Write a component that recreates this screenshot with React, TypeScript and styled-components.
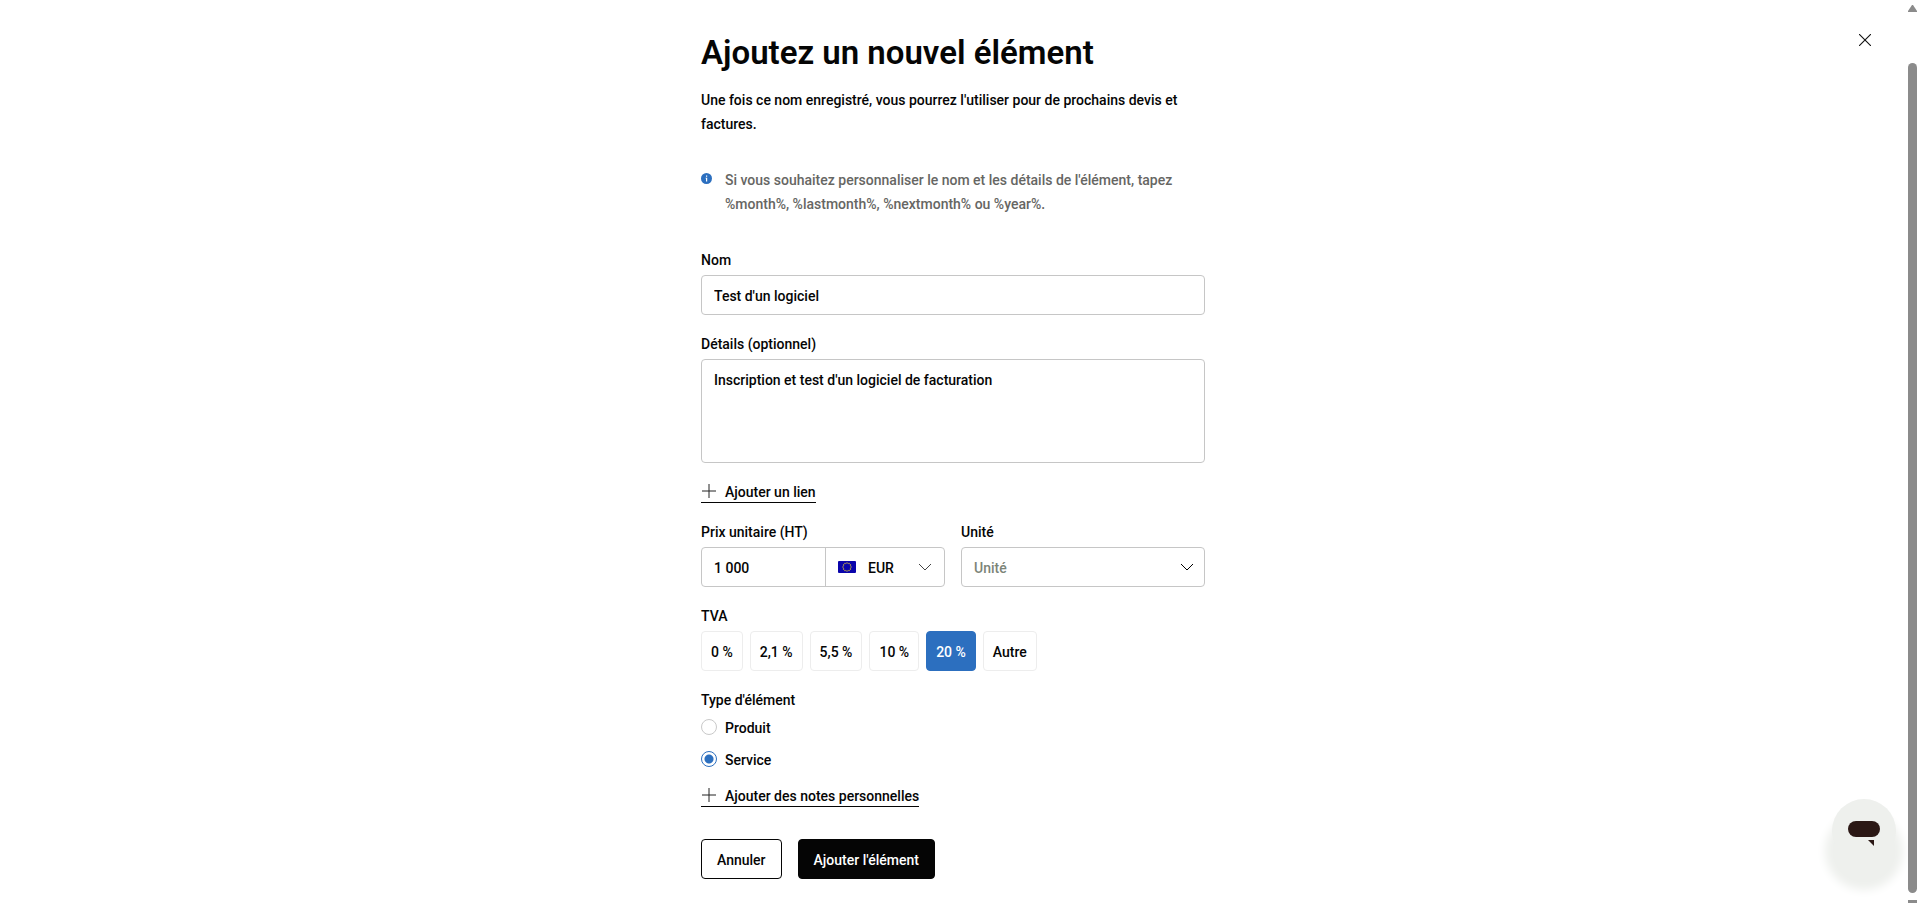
import React, { useState } from "react";
import styled, { createGlobalStyle, css } from "styled-components";

const INK = "#050505";
const BLUE = "#2c6fbf";
const LINE = "#c6c6c6";

const Global = createGlobalStyle`
  *, *::before, *::after { box-sizing: border-box; }
  html, body { margin: 0; background: #fff; }
  html { scrollbar-width: none; }
  body, button, input, textarea, select {
    font-family: Roboto, "Liberation Sans", sans-serif;
    font-size: 14px;
    font-weight: 500;
    line-height: 24px;
    color: ${INK};
  }
`;

const Page = styled.div`
  padding: 30px 14px 24px 0;
`;

const Form = styled.form`
  display: flex;
  flex-direction: column;
  gap: 17px;
  max-width: 504px;
  margin: 0 auto;
`;

const Header = styled.header`
  display: flex;
  flex-direction: column;
  gap: 12px;
`;

const Title = styled.h1`
  margin: 0;
  font-size: 33px;
  line-height: 46px;
  font-weight: 600;
`;

const Intro = styled.p`
  margin: 0;
`;

const Notice = styled.div`
  display: flex;
  gap: 13px;
  margin: 15px 0;
  color: #666663;

  p { margin: 0; }
  svg { flex: none; margin-top: 5px; }
`;

const Field = styled.div`
  display: flex;
  flex-direction: column;
  gap: 3px;
`;

const Fieldset = styled.fieldset`
  margin: 0;
  padding: 0;
  border: 0;
  min-width: 0;
`;

const Legend = styled.legend`
  padding: 0;
  margin-bottom: 3px;
`;

const box = css`
  border: 1px solid ${LINE};
  border-radius: 4px;
  background: #fff;
`;

const TextInput = styled.input`
  ${box}
  width: 100%;
  height: 40px;
  padding: 2px 12px 0;
  outline: none;
`;

const TextArea = styled.textarea`
  ${box}
  display: block;
  width: 100%;
  height: 104px;
  padding: 8px 12px;
  resize: none;
  outline: none;
`;

const Columns = styled.div`
  display: grid;
  grid-template-columns: 1fr 1fr;
  gap: 16px;
`;

const PriceGroup = styled.div`
  ${box}
  display: grid;
  grid-template-columns: 125fr 119fr;
  height: 40px;
`;

const PriceInput = styled.input`
  min-width: 0;
  border: 0;
  border-right: 1px solid ${LINE};
  border-radius: 0;
  padding: 2px 12px 0;
  background: transparent;
  outline: none;
`;

const Currency = styled.div`
  display: flex;
  align-items: center;
  gap: 12px;
  padding: 0 12px;

  svg { flex: none; }
`;

const CurrencySelect = styled.select`
  flex: 1;
  min-width: 0;
  appearance: none;
  border: 0;
  padding: 2px 0 0;
  background: transparent;
  outline: none;
`;

const SelectBox = styled.div`
  ${box}
  display: flex;
  align-items: center;
  height: 40px;
  padding: 0 10px 0 12px;
`;

const UnitSelect = styled(CurrencySelect)`
  color: #7c8478;
`;

const AddButton = styled.button`
  display: flex;
  align-items: center;
  align-self: flex-start;
  gap: 8px;
  height: 23px;
  padding: 0;
  border: 0;
  border-bottom: 1px solid ${INK};
  background: none;
  cursor: pointer;
`;

const Caption = styled.span`
  padding-top: 2px;
  line-height: 22px;
`;

const TypeGroup = styled.div`
  display: flex;
  flex-direction: column;
  gap: 13px;
`;

const Chips = styled.div`
  display: flex;
  gap: 7px;
`;

const Chip = styled.button<{ $on: boolean }>`
  height: 40px;
  padding: 2px 9px 0;
  border: 1px solid ${(p) => (p.$on ? BLUE : "#ededed")};
  border-radius: 4px;
  background: ${(p) => (p.$on ? BLUE : "#fff")};
  color: ${(p) => (p.$on ? "#fff" : INK)};
  cursor: pointer;
`;

const Radios = styled.div`
  display: flex;
  flex-direction: column;
  gap: 8px;
`;

const RadioLabel = styled.label`
  display: flex;
  align-items: center;
  gap: 8px;
`;

const Radio = styled.input`
  appearance: none;
  width: 16px;
  height: 16px;
  margin: 0;
  border: 1px solid #c9c9c9;
  border-radius: 50%;
  background: #fff;

  &:checked {
    border-color: ${BLUE};
    background: radial-gradient(circle, ${BLUE} 4px, #fff 5px);
  }
`;

const Actions = styled.div`
  display: flex;
  gap: 16px;
  margin-top: 15px;
`;

const Button = styled.button<{ $primary?: boolean }>`
  height: 40px;
  padding: 2px 15px 0;
  border: 1px solid ${INK};
  border-radius: 4px;
  background: ${(p) => (p.$primary ? INK : "#fff")};
  color: ${(p) => (p.$primary ? "#fff" : INK)};
  cursor: pointer;
`;

const Close = styled.button`
  position: fixed;
  top: 28px;
  right: 43px;
  display: grid;
  place-items: center;
  width: 24px;
  height: 24px;
  padding: 0;
  border: 0;
  background: none;
  cursor: pointer;
`;

const Scrollbar = styled.div`
  position: fixed;
  top: 0;
  right: 3px;
  bottom: 0;
  display: flex;
  flex-direction: column;
  width: 9px;
  padding-top: 5px;
  overflow: hidden;

  svg { flex: none; }
`;

const Thumb = styled.div`
  flex: 1;
  margin: 51px 0 7px;
  border-radius: 5px;
  background: #8b8b8b;
`;

const ScrollEnd = styled.div`
  height: 3px;
  background: #8b8b8b;
`;

const Chat = styled.button`
  position: fixed;
  right: 24px;
  bottom: 40px;
  width: 64px;
  height: 64px;
  padding: 0;
  border: 0;
  border-radius: 50%;
  background: #eef0ed;
  box-shadow: 0 20px 10px 7px #eef0ed;
  cursor: pointer;

  svg { display: block; }
`;

const Chevron = ({ color }: { color: string }) => (
  <svg width="14" height="8" viewBox="0 0 14 8" fill="none" stroke={color} strokeWidth="1" aria-hidden="true">
    <path d="M1 1l6 6 6-6" />
  </svg>
);

const Plus = () => (
  <svg width="16" height="16" viewBox="0 0 16 16" stroke="#222" strokeWidth="1" aria-hidden="true">
    <path d="M8 1v14M1 8h14" />
  </svg>
);

const Flag = () => (
  <svg width="18" height="12" viewBox="0 0 18 12" aria-hidden="true">
    <rect width="18" height="12" rx="1" fill="#0a04ab" />
    {Array.from({ length: 12 }, (_, i) => {
      const a = (i * Math.PI) / 6;
      return <circle key={i} cx={9 + 4 * Math.sin(a)} cy={6 - 4 * Math.cos(a)} r="0.7" fill="#d8c13a" />;
    })}
  </svg>
);

const rates = ["0 %", "2,1 %", "5,5 %", "10 %", "20 %", "Autre"];

export default function App() {
  const [rate, setRate] = useState("20 %");
  const [kind, setKind] = useState("Service");

  return (
    <>
      <Global />
      <Page>
        <Form onSubmit={(e) => e.preventDefault()}>
          <Header>
            <Title>Ajoutez un nouvel élément</Title>
            <Intro>
              Une fois ce nom enregistré, vous pourrez l'utiliser pour de prochains devis et factures.
            </Intro>
          </Header>
          <Notice>
            <svg width="11" height="11" viewBox="0 0 11 11" aria-hidden="true">
              <circle cx="5.5" cy="5.5" r="5.5" fill={BLUE} />
              <path d="M5 2.5h1.2v1.2H5zM4.6 4.7h1.6v3.8H5V5.6h-.4z" fill="#fff" />
            </svg>
            <p>
              Si vous souhaitez personnaliser le nom et les détails de l'élément, tapez %month%,
              %lastmonth%, %nextmonth% ou %year%.
            </p>
          </Notice>
          <Field>
            <label htmlFor="name">Nom</label>
            <TextInput id="name" defaultValue="Test d'un logiciel" />
          </Field>
          <Field>
            <label htmlFor="details">Détails (optionnel)</label>
            <TextArea id="details" defaultValue="Inscription et test d'un logiciel de facturation" />
          </Field>
          <AddButton type="button"><Plus /><Caption>Ajouter un lien</Caption></AddButton>
          <Columns>
            <Field>
              <label htmlFor="price">Prix unitaire (HT)</label>
              <PriceGroup>
                <PriceInput id="price" defaultValue="1 000" />
                <Currency>
                  <Flag />
                  <CurrencySelect aria-label="Devise" defaultValue="EUR">
                    <option>EUR</option>
                  </CurrencySelect>
                  <Chevron color="#444" />
                </Currency>
              </PriceGroup>
            </Field>
            <Field>
              <label htmlFor="unit">Unité</label>
              <SelectBox>
                <UnitSelect id="unit" defaultValue="">
                  <option value="">Unité</option>
                </UnitSelect>
                <Chevron color="#000" />
              </SelectBox>
            </Field>
          </Columns>
          <Fieldset>
            <Legend>TVA</Legend>
            <Chips>
              {rates.map((r) => (
                <Chip key={r} type="button" $on={r === rate} aria-pressed={r === rate} onClick={() => setRate(r)}>
                  {r}
                </Chip>
              ))}
            </Chips>
          </Fieldset>
          <TypeGroup>
            <Fieldset>
              <Legend>Type d'élément</Legend>
              <Radios>
                {["Produit", "Service"].map((k) => (
                  <RadioLabel key={k}>
                    <Radio type="radio" name="kind" checked={k === kind} onChange={() => setKind(k)} />
                    <Caption>{k}</Caption>
                  </RadioLabel>
                ))}
              </Radios>
            </Fieldset>
            <AddButton type="button"><Plus /><Caption>Ajouter des notes personnelles</Caption></AddButton>
          </TypeGroup>
          <Actions>
            <Button type="button">Annuler</Button>
            <Button type="submit" $primary>Ajouter l'élément</Button>
          </Actions>
        </Form>
      </Page>
      <Close type="button" aria-label="Fermer">
        <svg width="12" height="12" viewBox="0 0 12 12" stroke="#111" strokeWidth="1.1" aria-hidden="true">
          <path d="M0 0l12 12M12 0L0 12" />
        </svg>
      </Close>
      <Chat type="button" aria-label="Ouvrir la messagerie">
        <svg width="64" height="64" viewBox="0 0 64 64" fill="#2b1815" aria-hidden="true">
          <rect x="16" y="22" width="32" height="16" rx="8" />
          <path d="M36 41h6v6z" />
        </svg>
      </Chat>
      <Scrollbar aria-hidden="true">
        <svg width="9" height="7" viewBox="0 0 9 7" fill="#8b8b8b">
          <path d="M4 0h1l4 6v1H0V6z" />
        </svg>
        <Thumb />
        <ScrollEnd />
      </Scrollbar>
    </>
  );
}
